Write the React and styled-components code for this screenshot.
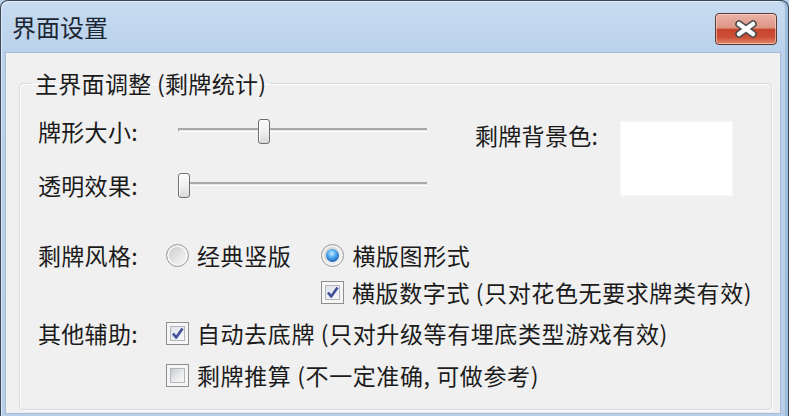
import React from 'react';
import styled, { createGlobalStyle } from 'styled-components';

const GlobalStyle = createGlobalStyle`
    html, body {
        margin: 0;
        padding: 0;
        background: #b9d1ea;
    }
    body {
        font-family: "Noto Sans CJK SC", "Noto Sans", sans-serif;
        color: #1b1b1b;
    }
`

export default function App() {
    return (
        <>
            <GlobalStyle />
            <Window>
                <TitleBar>
                    <Title>界面设置</Title>
                    <CloseButton>
                        <svg width="24" height="18" viewBox="0 0 24 18">
                            <path d="M5 4 L19 14 M19 4 L5 14" stroke="#4b4b4b" strokeWidth="7.5" strokeLinecap="round" fill="none" />
                            <path d="M5 4 L19 14 M19 4 L5 14" stroke="#ffffff" strokeWidth="4.5" strokeLinecap="round" fill="none" />
                        </svg>
                    </CloseButton>
                </TitleBar>
                <Content>
                    <Group>
                        <Legend>主界面调整 (剩牌统计)</Legend>
                        <GroupBody>
                            <TopSection>
                                <SliderColumn>
                                    <Row>
                                        <Label>牌形大小:</Label>
                                        <Slider value={80} />
                                    </Row>
                                    <Row>
                                        <Label>透明效果:</Label>
                                        <Slider value={0} />
                                    </Row>
                                </SliderColumn>
                                <ColorLabel>剩牌背景色:</ColorLabel>
                                <ColorBox />
                            </TopSection>

                            <Row $top={38}>
                                <Label>剩牌风格:</Label>
                                <Option $gap={30}>
                                    <Radio />
                                    经典竖版
                                </Option>
                                <Option>
                                    <Radio $checked />
                                    横版图形式
                                </Option>
                            </Row>
                            <Row $top={5}>
                                <Label />
                                <Option $indent={155}>
                                    <CheckBox checked />
                                    横版数字式 (只对花色无要求牌类有效)
                                </Option>
                            </Row>
                            <Row $top={9}>
                                <Label>其他辅助:</Label>
                                <Option>
                                    <CheckBox checked />
                                    自动去底牌 (只对升级等有埋底类型游戏有效)
                                </Option>
                            </Row>
                            <Row $top={10}>
                                <Label />
                                <Option>
                                    <CheckBox />
                                    剩牌推算 (不一定准确, 可做参考)
                                </Option>
                            </Row>
                        </GroupBody>
                    </Group>
                </Content>
            </Window>
        </>
    );
}

function Slider({ value }) {
    return (
        <SliderBox>
            <Track />
            <Thumb style={{ left: value + 'px' }} />
        </SliderBox>
    )
}

function CheckBox({ checked }) {
    return (
        <Box>
            <BoxInner $checked={checked}>
                {checked &&
                    <svg width="15" height="15" viewBox="0 0 15 15">
                        <path d="M3 7.5 L6.2 11.5 L12.5 2.5" stroke="#3f4f98" strokeWidth="2.6" fill="none" strokeLinejoin="round" />
                    </svg>}
            </BoxInner>
        </Box>
    )
}

const Window = styled.div`
    width: 789px;
    height: 416px;
    box-sizing: border-box;
    display: flex;
    flex-direction: column;
    border: 1px solid #3a4756;
    border-bottom: none;
    border-radius: 8px 8px 0 0;
    background: linear-gradient(to bottom, #c7dcf1 0, #b9d1ea 52px, #b7cfe9 100%);
    box-shadow: inset -3px 0 0 #9fbedb, inset 1px 1px 0 rgba(255, 255, 255, 0.5);
    overflow: hidden;
`

const TitleBar = styled.div`
    height: 51px;
    flex-shrink: 0;
    display: flex;
    justify-content: space-between;
    align-items: flex-start;
    padding: 0 11px;
`

const Title = styled.div`
    margin-top: 12px;
    font-size: 24px;
    line-height: 28px;
    color: #1d2633;
`

const CloseButton = styled.div`
    width: 62px;
    height: 32px;
    margin-top: 12px;
    box-sizing: border-box;
    border: 1px solid #5f3833;
    border-radius: 4px;
    background: linear-gradient(to bottom, #eab3a6 0%, #dd9584 46%, #c6432b 52%, #cc4f36 78%, #e08a70 100%);
    box-shadow: inset 0 0 0 1px rgba(255, 230, 220, 0.55);
    display: flex;
    align-items: center;
    justify-content: center;
`

const Content = styled.div`
    flex: 1;
    margin: 0 7px 2px 4px;
    background: #f0f0f0;
    border: 1px solid #a7bcd2;
    display: flex;
    flex-direction: column;
    min-height: 0;
`

const Group = styled.fieldset`
    flex: 1;
    min-width: 0;
    margin: 16px 8px 3px 13px;
    padding: 0;
    border: 1px solid #d2d9df;
    border-radius: 4px;
    box-shadow: inset 1px 1px 0 #ffffff, 1px 1px 0 #ffffff;
`

const Legend = styled.legend`
    margin-left: 11px;
    padding: 0 4px;
    font-size: 23px;
    line-height: 28px;
    letter-spacing: 0.3px;
`

const GroupBody = styled.div`
    padding: 18px 0 0 18px;
`

const TopSection = styled.div`
    display: flex;
    align-items: flex-start;
`

const SliderColumn = styled.div`
    display: flex;
    flex-direction: column;
    gap: 22px;
`

const Row = styled.div`
    display: flex;
    align-items: center;
    height: 32px;
    margin-top: ${p => p.$top || 0}px;
`

const Label = styled.div`
    width: 128px;
    flex-shrink: 0;
    font-size: 23px;
    line-height: 32px;
    letter-spacing: 0.3px;
    white-space: nowrap;
`

const ColorLabel = styled(Label)`
    width: 145px;
    margin-left: 48px;
    margin-top: 4px;
`

const ColorBox = styled.div`
    width: 113px;
    height: 75px;
    margin-top: 6px;
    box-sizing: border-box;
    background: #ffffff;
    border: 1px solid #f7f7f7;
`

const SliderBox = styled.div`
    position: relative;
    width: 249px;
    height: 32px;
    margin-left: 12px;
    display: flex;
    align-items: center;
`

const Track = styled.div`
    width: 100%;
    height: 4px;
    box-sizing: border-box;
    background: #e4e6e8;
    border-top: 2px solid #a9a9a9;
    border-left: 1px solid #a9a9a9;
    border-bottom: 1px solid #ffffff;
    margin-top: -2px;
`

const Thumb = styled.div`
    position: absolute;
    top: 4px;
    width: 12px;
    height: 25px;
    box-sizing: border-box;
    border: 1px solid #6f6f6f;
    border-radius: 3px;
    background: linear-gradient(to bottom, #fbfbfb 0%, #f0f0f0 50%, #d9d9d9 100%);
    box-shadow: inset 1px 1px 0 #ffffff;
`

const Option = styled.label`
    display: flex;
    align-items: center;
    gap: 8px;
    font-size: 23px;
    line-height: 32px;
    letter-spacing: 0.6px;
    white-space: nowrap;
    margin-left: ${p => p.$indent || 0}px;
    margin-right: ${p => p.$gap || 0}px;
`

const Radio = styled.span`
    position: relative;
    width: 23px;
    height: 23px;
    flex-shrink: 0;
    box-sizing: border-box;
    border-radius: 50%;
    border: 1px solid #9a9a9a;
    background: linear-gradient(135deg, #c4c4c4 0%, #e6e6e6 55%, #fafafa 100%);
    box-shadow: inset 0 0 0 2px #f4f4f4;
    &::after {
        content: "";
        display: ${p => p.$checked ? 'block' : 'none'};
        position: absolute;
        left: 4px;
        top: 4px;
        width: 13px;
        height: 13px;
        border-radius: 50%;
        background: radial-gradient(circle at 45% 35%, #c9ecff 0%, #55aef0 35%, #1a63b8 75%, #0d3f7f 100%);
    }
`

const Box = styled.span`
    width: 23px;
    height: 23px;
    flex-shrink: 0;
    box-sizing: border-box;
    border: 1px solid #8e8e8e;
    background: #f6f6f6;
    padding: 3px;
    display: flex;
`

const BoxInner = styled.span`
    flex: 1;
    border: 1px solid #b3b7bd;
    background: ${p => p.$checked
        ? 'linear-gradient(135deg, #dfe2ea 0%, #f7f7fa 100%)'
        : 'linear-gradient(135deg, #c8cbd0 0%, #eceded 60%, #f7f7f7 100%)'};
    display: flex;
    align-items: center;
    justify-content: center;
    svg {
        margin: -2px;
    }
`
